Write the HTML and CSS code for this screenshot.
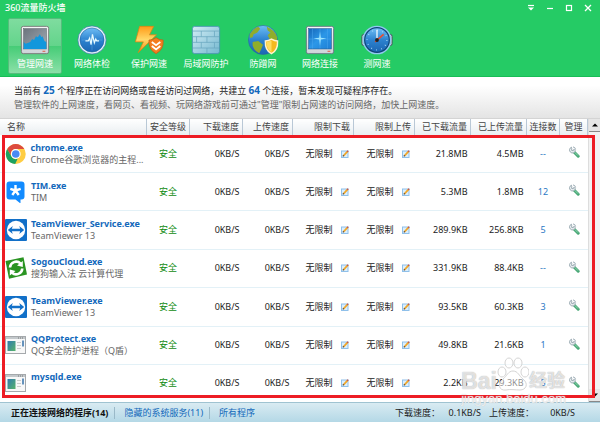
FILE: index.html
```
<!DOCTYPE html>
<html lang="zh-CN">
<head>
    <meta charset="UTF-8">
    <meta name="viewport" content="width=device-width, initial-scale=1.0">
    <title>360流量防火墙</title>
    <link rel="stylesheet" href="styles.css">
</head>
<body>
    <!-- shared icons -->
    <svg class="sprite" aria-hidden="true">
        <defs>
            <linearGradient id="g-blue" x1="0" y1="0" x2="0" y2="1"><stop offset="0" stop-color="#6fbef5"/><stop offset=".5" stop-color="#2c82cf"/><stop offset="1" stop-color="#1c66b3"/></linearGradient>
            <linearGradient id="g-panel" x1="0" y1="0" x2="1" y2="1"><stop offset="0" stop-color="#1767b8"/><stop offset=".5" stop-color="#2b97e8"/><stop offset="1" stop-color="#1f7fd4"/></linearGradient>
            <linearGradient id="g-screen" x1="0" y1="0" x2="1" y2="1"><stop offset="0" stop-color="#6b747d"/><stop offset="1" stop-color="#a4adb6"/></linearGradient>
            <linearGradient id="g-metal" x1="0" y1="0" x2="0" y2="1"><stop offset="0" stop-color="#f7f7f7"/><stop offset="1" stop-color="#cdd3d8"/></linearGradient>
            <linearGradient id="g-bolt" x1="0" y1="0" x2="0" y2="1"><stop offset="0" stop-color="#ff9a17"/><stop offset=".5" stop-color="#ffd768"/><stop offset="1" stop-color="#f58a0b"/></linearGradient>
            <linearGradient id="g-wall" x1="0" y1="0" x2="1" y2="1"><stop offset="0" stop-color="#d3edf5"/><stop offset="1" stop-color="#74b8d0"/></linearGradient>
            <linearGradient id="g-app" x1="0" y1="0" x2="1" y2="1"><stop offset="0" stop-color="#2f7bb0"/><stop offset="1" stop-color="#58b36a"/></linearGradient>
        </defs>
        <symbol id="i-edit" viewBox="0 0 8 8">
            <rect x=".5" y="1" width="6.5" height="6.5" fill="#d9efff" stroke="#8fc0ea"/>
            <path d="M2.4 5.8 6.6 1.4" stroke="#f0a62a" stroke-width="1.8"/>
            <path d="M6.2 1.8 7.2.8" stroke="#c0504d" stroke-width="1.6"/>
            <path d="M1.8 6.4 2.7 5.4" stroke="#444" stroke-width="1.2"/>
        </symbol>
        <symbol id="i-wrench" viewBox="0 0 12 12">
            <path d="M6.5 6.5 10.2 10.2" stroke="#4aa877" stroke-width="3" stroke-linecap="round"/>
            <path d="M6.6 6.2 10 9.6" stroke="#8fd6b0" stroke-width="1"/>
            <path d="M3.4 1.2A3 3 0 1 0 7.4 4.9L6 3.2 5.2 4.8 3.6 4.4 3.8 2.8Z" fill="#edf1f3" stroke="#8497a1" stroke-width=".8"/>
            <path d="M5 .9a3 3 0 0 1 2.600 2.700" fill="none" stroke="#9dadb6"/>
        </symbol>
        <symbol id="i-chrome" viewBox="0 0 22 22">
            <circle cx="11" cy="11" r="10.2" fill="#ffcd42"/>
            <path d="M2.2 5.9A10.2 10.2 0 0 1 19.8 5.9H11A5.1 5.1 0 0 0 6.4 13.2Z" fill="#dd4b3e"/>
            <path d="M2.2 5.9 6.6 13.6A5.1 5.1 0 0 0 13 15.7L10.4 21.2A10.2 10.2 0 0 1 2.2 5.9Z" fill="#1da260"/>
            <circle cx="11" cy="11" r="5" fill="#fff"/><circle cx="11" cy="11" r="3.9" fill="#4a8af4"/>
        </symbol>
        <symbol id="i-tim" viewBox="0 0 22 22">
            <path d="M4.500.5h12Q19.500.5 19.500 3.500v12q0 3-3 3H15.500V22.500L10.500 18.500h-6q-3 0-3-3v-12q0-3 3-3Z" fill="#128bff"/>
            <path d="M10.500 9.500V4M10.500 9.500 5.300 7.800M10.500 9.500l5.200-1.700M10.500 9.500 7.300 14M10.500 9.500l3.200 4.500" stroke="#fff" stroke-width="2.400"/>
        </symbol>
        <symbol id="i-team" viewBox="0 0 22 22">
            <rect width="22" height="22" rx="1" fill="#1270c8"/>
            <circle cx="11" cy="11" r="9.200" fill="#fff"/>
            <path d="m2.800 11 5-4-1 2.800h8.400l-1-2.800 5 4-5 4 1-2.800H6.800l1 2.800Z" fill="#1270c8"/>
        </symbol>
        <symbol id="i-sogou" viewBox="0 0 22 22">
            <path d="M.5 4 18.500.3 22 17.500 4 21.800Z" fill="#2a9422"/>
            <path d="M5 10.500A6.200 6.200 0 0 1 15.500 6.500M17.300 11.500A6.200 6.200 0 0 1 7 15.800" fill="none" stroke="#fff" stroke-width="2.600"/>
            <path d="M17.800 4v6l-5.800-1.500ZM4.800 18.500v-6l5.700 1.500Z" fill="#fff"/>
        </symbol>
        <symbol id="i-app" viewBox="0 0 22 22">
            <rect x=".5" y="2.500" width="20" height="17" fill="#f8f8f8" stroke="#a5a9ac"/>
            <path d="M1 4h19" stroke="#c3c8cb" stroke-width="2"/><path d="M13 4h6" stroke="#777" stroke-dasharray="1 1"/>
            <rect x="2.500" y="7" width="8" height="10" fill="url(#g-app)"/>
            <path d="M12 8.500h4M12 11.500h4M12 14.500h4" stroke="#ccc"/><path d="M18 6.500v6" stroke="#3570a8" stroke-width="1.500"/>
        </symbol>
    </svg>

    <header class="header">
        <div class="titlebar">
            <h1>360流量防火墙</h1>
            <div class="window-buttons">
                <button aria-label="菜单"><svg viewBox="0 0 8 8"><path d="M1 1.500h6" stroke="#fff" stroke-width="1.200"/><path d="M1 3.500h6L4 6.500Z" fill="#fff"/></svg></button>
                <button aria-label="最小化"><svg viewBox="0 0 8 8"><path d="M1 4.500h6" stroke="#fff" stroke-width="1.200"/></svg></button>
                <button aria-label="最大化"><svg viewBox="0 0 8 8"><rect x="1.500" y="1.500" width="5" height="5" fill="none" stroke="#fff" stroke-width="1.200"/></svg></button>
                <button aria-label="关闭"><svg viewBox="0 0 8 8"><path d="m1 1 6 6M7 1 1 7" stroke="#fff" stroke-width="1.300"/></svg></button>
            </div>
        </div>
        <nav class="toolbar">
            <button class="tool active">
                <svg viewBox="0 0 34 34">
                    <rect x="2.500" y="2.500" width="29" height="29" rx="2" fill="url(#g-metal)" stroke="#777"/>
                    <rect x="5" y="5" width="24" height="21.500" fill="url(#g-screen)" stroke="#555e66" stroke-width=".6"/>
                    <path d="M5 19l2 2 3-1 2-1 2-3 2 1 2-4 2 1 2-3 2 3 1-1 2 5 2 1v7.500H5Z" fill="#1297dc"/>
                    <path d="M25 29h3" stroke="#e0533d"/>
                </svg>
                管理网速
            </button>
            <button class="tool">
                <svg viewBox="0 0 34 34">
                    <circle cx="17" cy="17" r="15" fill="#e8f4fa" stroke="#397aa5" stroke-width=".8"/>
                    <circle cx="17" cy="17" r="12.800" fill="url(#g-blue)" stroke="#1a5b9b" stroke-width=".6"/>
                    <path d="M17 6v22M6 17h22" stroke="#69aee4" stroke-width=".5"/>
                    <path d="M10 18h3l1.500-3 1.500 7 1.500-11 2 9 1.500-4 1 2h2.500" fill="none" stroke="#e9fbff" stroke-width="1.300"/>
                </svg>
                网络体检
            </button>
            <button class="tool">
                <svg viewBox="0 0 34 34">
                    <path d="M7 2.500h15l-4.500 9H25L5.500 30.500 11 19H2.500Z" fill="url(#g-bolt)" stroke="#dc8313" stroke-width=".8"/>
                    <path d="M24.500 14.500q4 3 7.500 2.500 1 10-7.500 14.500-8.500-4.500-7.500-14.500 3.500.5 7.500-2.500Z" fill="#f47c20" stroke="#c95c10" stroke-width=".8"/>
                    <path d="m20 19 4.500 3.500L29 19M20 23.500l4.500 3.500 4.500-3.500" fill="none" stroke="#fff" stroke-width="2"/>
                </svg>
                保护网速
            </button>
            <button class="tool">
                <svg viewBox="0 0 34 34">
                    <rect x="2.500" y="2.500" width="29" height="29" rx="2.500" fill="url(#g-wall)" stroke="#4a96b0"/>
                    <path d="M3 7.500h28M3 13.500h28M3 19.500h28M3 25.500h28M12 7.500v6M26 7.500v6M7 13.500v6M18 13.500v6M12 19.500v6M26 19.500v6M18 25.500v6" stroke="#6aa7bf" stroke-width=".8"/>
                </svg>
                局域网防护
            </button>
            <button class="tool">
                <svg viewBox="0 0 34 34">
                    <circle cx="17" cy="17" r="15.500" fill="url(#g-blue)" stroke="#2d659b" stroke-width=".6"/>
                    <path d="M3 11Q6 5 12 3l2 2-3 4-4 2-1 3-3 1ZM21 3q8 3 11 11v6l-4-3-4-1-2-4 3-3-3-2ZM6 19l6-1 5 4-2 5-2 4q-5-2-7-8Z" fill="#90ad2b"/>
                    <path d="M26 16q3.500 2 6.500 2 .5 10-6.500 13.500-7-3.500-6.500-13.500 3 0 6.500-2Z" fill="#f5b91e" stroke="#fff3cf" stroke-width="1.500"/>
                    <path d="M26 17.500v12.500q-5.500-3.300-5.400-10.500Z" fill="#ffdc60"/>
                </svg>
                防蹭网
            </button>
            <button class="tool">
                <svg viewBox="0 0 34 34">
                    <rect x="2.500" y="2.500" width="29" height="29" rx="2" fill="url(#g-metal)" stroke="#677783"/>
                    <rect x="5" y="5" width="24" height="21.500" fill="url(#g-panel)" stroke="#1c558f" stroke-width=".6"/>
                    <path d="M5 16h24M17 5v21M9 5v21M25 5v21" stroke="#4fa9f0" stroke-width=".5"/>
                    <path d="m17 8 .9 6.600L24 15.500l-6.100.9L17 23l-.9-6.600-6.100-.9 6.100-.9Z" fill="#9be4ff"/>
                    <path d="M25 29h3" stroke="#e0533d"/>
                </svg>
                网络连接
            </button>
            <button class="tool">
                <svg viewBox="0 0 34 34">
                    <rect x="1" y="11" width="32" height="12" rx="2" fill="#d9dfe3" stroke="#3a4a59"/>
                    <circle cx="17" cy="17" r="14.500" fill="#0e4377" stroke="#8fcaef" stroke-width="1.500"/>
                    <circle cx="17" cy="17" r="12.500" fill="url(#g-blue)"/>
                    <circle cx="17" cy="17" r="10.500" fill="none" stroke="#a7dbfb" stroke-width="1.500" stroke-dasharray=".8 4.700"/>
                    <path d="M17 17V6" stroke="#fff" stroke-width="1.300"/><path d="m15 19 9-8" stroke="#ee4b2b" stroke-width="1.500"/>
                    <circle cx="17" cy="17" r="2" fill="#222"/>
                </svg>
                测网速
            </button>
        </nav>
    </header>

    <section class="info">
        <p>当前有 <b>25</b> 个程序正在访问网络或曾经访问过网络，共建立 <b>64</b> 个连接，暂未发现可疑程序存在。</p>
        <p class="hint">管理软件的上网速度，看网页、看视频、玩网络游戏前可通过"管理"限制占网速的访问网络，加快上网速度。</p>
    </section>

    <main class="content">
        <table class="programs">
            <colgroup>
                <col class="col-name"><col class="col-level"><col class="col-speed"><col class="col-upload"><col class="col-limit"><col class="col-limit"><col class="col-total"><col class="col-total"><col class="col-count"><col class="col-manage">
            </colgroup>
            <thead>
                <tr>
                    <th class="name">名称</th><th class="center">安全等级</th><th>下载速度</th><th>上传速度</th><th>限制下载</th><th>限制上传</th><th>已下载流量</th><th>已上传流量</th><th class="center">连接数</th><th class="center">管理</th>
                </tr>
            </thead>
            <tbody id="program-list"></tbody>
        </table>
        <div class="scrollbar">
            <button aria-label="向上滚动"><svg viewBox="0 0 8 8"><path d="M1 5.500h6L4 2.500Z"/></svg></button>
            <button aria-label="向下滚动"><svg viewBox="0 0 8 8"><path d="M1 2.500h6L4 5.500Z"/></svg></button>
        </div>
        <div class="highlight"></div>
        <div class="watermark">
            <div class="watermark-logo">
                <span>Bai</span>
                <svg viewBox="0 0 32 34"><ellipse cx="5" cy="15" rx="4" ry="5"/><ellipse cx="12" cy="6" rx="4" ry="5"/><ellipse cx="21" cy="6" rx="4" ry="5"/><ellipse cx="28" cy="15" rx="4" ry="5"/><path d="M16 14c5 0 6 5 10 8 6 5 3 11-3 11-4 0-10-1-14 0-7 1-9-6-3-11 4-3 5-8 10-8Z"/></svg>
                <span>经验</span>
            </div>
            <div class="watermark-url">jingyan.baidu.com</div>
        </div>
    </main>

    <footer class="footer">
        <nav class="tabs">
            <a href="#" class="current">正在连接网络的程序(14)</a>
            <a href="#">隐藏的系统服务(11)</a>
            <a href="#">所有程序</a>
        </nav>
        <div class="speed"><span>下载速度：</span><span>0.1KB/S</span></div>
        <div class="speed"><span>上传速度：</span><span>0KB/S</span></div>
    </footer>

    <script src="script.js"></script>
</body>
</html>
```

FILE: styles.css
```
:root {
    --green: #25cb65;
    --link: #1268bb;
    --text: #222;
    --muted: #666;
}

* {
    margin: 0;
    padding: 0;
    box-sizing: border-box;
}

body {
    display: flex;
    flex-direction: column;
    height: 100vh;
    overflow: hidden;
    background: #fff;
    color: var(--text);
    font: 9px/12px "Noto Sans", "Noto Sans CJK SC", sans-serif;
}

button {
    border: none;
    background: none;
    color: inherit;
    font: inherit;
    cursor: pointer;
}

a {
    color: var(--link);
    text-decoration: none;
}

.sprite {
    position: absolute;
    width: 0;
    height: 0;
}

.header {
    background: var(--green);
    border-bottom: 1px solid #17bd56;
    color: #fff;
    padding-bottom: 2px;
}

.titlebar {
    display: flex;
    justify-content: space-between;
    padding: 2px 8px 0 5px;
    height: 18px;
}

h1 {
    font-size: 9px;
    font-weight: 500;
    line-height: 12px;
}

.window-buttons {
    display: flex;
    gap: 11px;
}

.window-buttons button {
    width: 8px;
    height: 12px;
}

.window-buttons svg {
    display: block;
    width: 8px;
    height: 8px;
}

.toolbar {
    display: flex;
    gap: 3px;
    padding-left: 8px;
}

.tool {
    display: flex;
    flex-direction: column;
    align-items: center;
    gap: 2px;
    width: 54px;
    height: 56px;
    padding-top: 5px;
    border: 1px solid transparent;
    border-radius: 2px;
    white-space: nowrap;
}

.tool svg {
    width: 32px;
    height: 32px;
    flex: none;
}

.tool.active {
    border-color: #55bd7c;
    background: linear-gradient(#7fdc9f, #63d48b 50%, #45cc76 50%, #8be0a8);
}

.info {
    padding: 6px 14px;
    background: linear-gradient(#fff 20%, #e4e4e4);
    white-space: nowrap;
    border-bottom: 1px solid #d4d4d4;
}

.info p {
    line-height: 14px;
}

.info b {
    color: var(--link);
    font-size: 10px;
}

.hint {
    color: var(--muted);
}

.content {
    position: relative;
    display: flex;
    flex: 1;
    min-height: 0;
}

.programs {
    flex: 1;
    width: 0;
    height: 100%;
    table-layout: fixed;
    border-collapse: collapse;
    white-space: nowrap;
}

.col-level { width: 43px; }
.col-speed { width: 53px; }
.col-upload { width: 50px; }
.col-limit { width: 61px; }
.col-total { width: 56px; }
.col-count { width: 33px; }
.col-manage { width: 28px; }

th {
    height: 16px;
    padding-right: 3px;
    background: linear-gradient(#fff, #e9eef1);
    border-right: 1px solid #b9c8d6;
    font-weight: normal;
    text-align: right;
    color: #444;
}

th.name {
    padding-left: 7px;
    text-align: left;
}

th.center, td.center {
    padding: 0;
    text-align: center;
}

td {
    padding-right: 3px;
    border-bottom: 1px solid #e3f1f7;
    text-align: right;
}

tr:last-child td {
    border-bottom: none;
}

.program {
    display: flex;
    align-items: center;
    gap: 4px;
    padding-left: 5px;
    text-align: left;
}

.program svg {
    width: 22px;
    height: 22px;
}

.program strong, .program small {
    display: block;
    height: 12px;
    font-size: 9px;
}

.program strong {
    color: var(--link);
}

.program small {
    color: var(--muted);
}

.safe {
    color: #128c12;
}

.limit {
    display: flex;
    justify-content: flex-end;
    align-items: center;
    gap: 8px;
    padding-right: 2px;
}

.limit svg {
    display: block;
    width: 8px;
    height: 8px;
}

.connections {
    color: #2b78c4;
}

.wrench svg {
    display: block;
    width: 12px;
    height: 12px;
}

.scrollbar {
    display: flex;
    flex-direction: column;
    justify-content: space-between;
    width: 12px;
    background: #f2f2f2;
    border-left: 1px solid #ddd;
}

.scrollbar button {
    height: 13px;
    background: #e6e6e6;
    border-bottom: 1px solid #888;
}

.scrollbar svg {
    display: block;
    width: 8px;
    height: 8px;
    margin: 0 auto;
}

/* red frame over the program list */
.highlight {
    position: absolute;
    inset: 16px 5px 4px 2px;
    border: 3px solid #ed1c24;
}

.watermark {
    position: absolute;
    right: 34px;
    bottom: -4px;
    color: rgba(255, 255, 255, 0.7);
}

.watermark-logo {
    display: flex;
    align-items: flex-end;
    font: bold 23px/20px "Liberation Sans", "Noto Sans CJK SC", sans-serif;
    text-shadow: 0 0 1px #999;
}

.watermark-logo svg {
    width: 32px;
    height: 34px;
    fill: rgba(255, 255, 255, 0.5);
    stroke: #d4d4d4;
    stroke-width: 1;
}

.watermark-logo span:last-child {
    font-size: 18px;
}

.watermark-url {
    font: 13px/15px "Liberation Sans", sans-serif;
    text-shadow: 0 0 1px #bbb;
}

.footer {
    display: flex;
    align-items: center;
    height: 20px;
    padding: 0 25px 0 11px;
    background: linear-gradient(#d9ebf2, #b4d8e6);
    border-top: 1px solid #9fc3d1;
    white-space: nowrap;
}

.tabs {
    display: flex;
    flex: 1;
}

.tabs a {
    padding-right: 6px;
}

.tabs a + a {
    padding-left: 9px;
    border-left: 1px solid #9ab9c8;
}

.tabs .current {
    color: #111;
    font-weight: bold;
}

.speed {
    display: flex;
    justify-content: space-between;
    width: 86px;
}

.speed + .speed {
    margin-left: 8px;
}
```

FILE: script.js
```
const programs = [
    { icon: 'chrome', name: 'chrome.exe', desc: 'Chrome谷歌浏览器的主程...', down: '21.8MB', up: '4.5MB', count: '--' },
    { icon: 'tim', name: 'TIM.exe', desc: 'TIM', down: '5.3MB', up: '1.8MB', count: '12' },
    { icon: 'team', name: 'TeamViewer_Service.exe', desc: 'TeamViewer 13', down: '289.9KB', up: '256.8KB', count: '5' },
    { icon: 'sogou', name: 'SogouCloud.exe', desc: '搜狗输入法 云计算代理', down: '331.9KB', up: '88.4KB', count: '--' },
    { icon: 'team', name: 'TeamViewer.exe', desc: 'TeamViewer 13', down: '93.5KB', up: '60.3KB', count: '3' },
    { icon: 'app', name: 'QQProtect.exe', desc: 'QQ安全防护进程（Q盾）', down: '49.8KB', up: '21.6KB', count: '1' },
    { icon: 'app', name: 'mysqld.exe', desc: '', down: '2.2KB', up: '29.3KB', count: '5' }
];

const icon = name => `<svg aria-hidden="true"><use href="#i-${name}"/></svg>`;
const limit = label => `<td><div class="limit">无限制<button aria-label="${label}">${icon('edit')}</button></div></td>`;

document.getElementById('program-list').innerHTML = programs.map(p => `
    <tr>
        <td><div class="program">${icon(p.icon)}<div><strong>${p.name}</strong><small>${p.desc}</small></div></div></td>
        <td class="center safe">安全</td>
        <td>0KB/S</td>
        <td>0KB/S</td>
        ${limit('限制下载')}
        ${limit('限制上传')}
        <td>${p.down}</td>
        <td>${p.up}</td>
        <td class="center connections">${p.count}</td>
        <td class="center wrench"><button aria-label="管理">${icon('wrench')}</button></td>
    </tr>`).join('');
```
